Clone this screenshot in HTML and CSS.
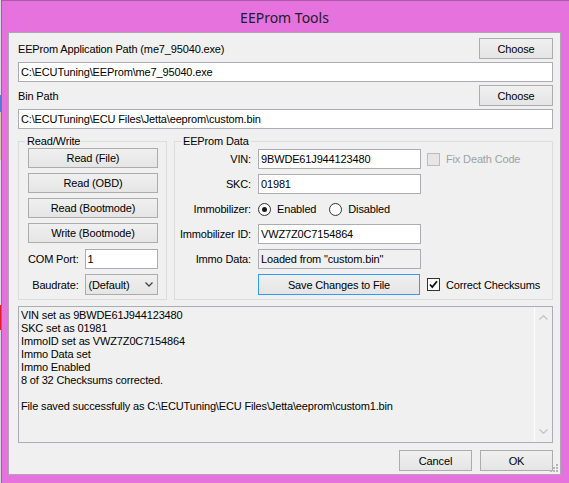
FILE: index.html
```html
<!DOCTYPE html>
<html>
<head>
<meta charset="utf-8">
<title>EEProm Tools</title>
<link rel="stylesheet" href="styles.css">
</head>
<body>
<div class="screen">
  <div class="desk"></div>
  <div class="window">
    <div class="titlebar">EEProm Tools</div>
    <div class="client">
      <div class="pathhead">
        <span>EEProm Application Path (me7_95040.exe)</span>
        <button class="btn choose">Choose</button>
      </div>
      <div class="field path">C:\ECUTuning\EEProm\me7_95040.exe</div>
      <div class="pathhead">
        <span>Bin Path</span>
        <button class="btn choose">Choose</button>
      </div>
      <div class="field path">C:\ECUTuning\ECU Files\Jetta\eeprom\custom.bin</div>

      <div class="groups">
        <fieldset class="group rw">
          <legend>Read/Write</legend>
          <div class="rw-body">
            <button class="btn wide">Read (File)</button>
            <button class="btn wide">Read (OBD)</button>
            <button class="btn wide">Read (Bootmode)</button>
            <button class="btn wide">Write (Bootmode)</button>
            <div class="rw-row com">
              <span class="rw-label">COM Port:</span>
              <div class="field small">1</div>
            </div>
            <div class="rw-row">
              <span class="rw-label">Baudrate:</span>
              <div class="combo">
                <span>(Default)</span>
                <svg class="chev" width="8" height="5" viewBox="0 0 8 5"><path d="M0.5 0.5 L4 4 L7.5 0.5" fill="none" stroke="#444" stroke-width="1.3"/></svg>
              </div>
            </div>
          </div>
        </fieldset>

        <fieldset class="group data">
          <legend>EEProm Data</legend>
          <div class="data-grid">
            <span class="lbl">VIN:</span>
            <div class="field">9BWDE61J944123480</div>
            <div class="check disabled"><span class="box"></span><span>Fix Death Code</span></div>

            <span class="lbl">SKC:</span>
            <div class="field">01981</div>
            <span></span>

            <span class="lbl">Immobilizer:</span>
            <div class="radios">
              <div class="radio on"><span class="circle"></span><span>Enabled</span></div>
              <div class="radio"><span class="circle"></span><span>Disabled</span></div>
            </div>
            <span></span>

            <span class="lbl">Immobilizer ID:</span>
            <div class="field">VWZ7Z0C7154864</div>
            <span></span>

            <span class="lbl">Immo Data:</span>
            <div class="field ro">Loaded from "custom.bin"</div>
            <span></span>

            <span></span>
            <button class="btn save">Save Changes to File</button>
            <div class="check"><span class="box"><svg width="11" height="11" viewBox="0 0 11 11"><path d="M2 5.5 L4.3 8 L9 2.2" fill="none" stroke="#111" stroke-width="1.8"/></svg></span><span>Correct Checksums</span></div>
          </div>
        </fieldset>
      </div>

      <div class="log">
        <div class="log-text">
          <div>VIN set as 9BWDE61J944123480</div>
          <div>SKC set as 01981</div>
          <div>ImmoID set as VWZ7Z0C7154864</div>
          <div>Immo Data set</div>
          <div>Immo Enabled</div>
          <div>8 of 32 Checksums corrected.</div>
          <div>&nbsp;</div>
          <div>File saved successfully as C:\ECUTuning\ECU Files\Jetta\eeprom\custom1.bin</div>
        </div>
        <div class="scroll">
          <svg width="9" height="5" viewBox="0 0 9 5"><path d="M0.5 4.5 L4.5 0.7 L8.5 4.5" fill="none" stroke="#c2c2c2" stroke-width="1.2"/></svg>
          <svg width="9" height="5" viewBox="0 0 9 5"><path d="M0.5 0.5 L4.5 4.3 L8.5 0.5" fill="none" stroke="#c2c2c2" stroke-width="1.2"/></svg>
        </div>
      </div>

      <div class="footer">
        <button class="btn foot">Cancel</button>
        <button class="btn foot">OK</button>
      </div>

      <svg class="grip" width="9" height="9" viewBox="0 0 9 9">
        <rect x="6" y="0" width="2" height="2" fill="#b5b5b5"/>
        <rect x="3" y="3" width="2" height="2" fill="#b5b5b5"/>
        <rect x="6" y="3" width="2" height="2" fill="#b5b5b5"/>
        <rect x="0" y="6" width="2" height="2" fill="#b5b5b5"/>
        <rect x="3" y="6" width="2" height="2" fill="#b5b5b5"/>
        <rect x="6" y="6" width="2" height="2" fill="#b5b5b5"/>
      </svg>
    </div>
  </div>
</div>
</body>
</html>
```

FILE: styles.css
```css
html, body {
  margin: 0;
  padding: 0;
  background: #e572dd;
}

.screen {
  display: flex;
  width: 569px;
  height: 483px;
  overflow: hidden;
  font-family: "Liberation Sans", Arial, sans-serif;
  font-size: 11px;
  letter-spacing: -0.15px;
  color: #000;
}

.desk {
  width: 1px;
  flex: none;
  background: linear-gradient(to bottom,
    #d9d9e3 0, #d9d9e3 95px, #4a7fd0 95px, #4a7fd0 112px,
    #d6c8a8 112px, #d6c8a8 160px, #e0e0e8 160px, #e0e0e8 305px,
    #e02020 305px, #e02020 330px, #d8d8e0 330px);
}

.window {
  flex: 1;
  display: flex;
  flex-direction: column;
  background: #e572dd;
  border-left: 1px solid #a95ca5;
  border-top: 1px solid #a95ca5;
  padding: 0 8px 8px 6px;
}

.titlebar {
  height: 31px;
  flex: none;
  box-sizing: border-box;
  padding-top: 2px;
  line-height: 29px;
  text-align: center;
  font-family: "Noto Sans", "Open Sans", sans-serif;
  font-size: 14px;
  letter-spacing: 0;
  color: #1c1c2a;
}

.client {
  position: relative;
  flex: 1;
  background: #f0f0f0;
  border: 1px solid #b3a2b2;
  padding: 5px 7px 0 9px;
}

.pathhead {
  display: flex;
  justify-content: space-between;
  align-items: center;
  height: 21px;
}

.pathhead + .field {
  margin-top: 3px;
}

.field + .pathhead {
  margin-top: 3px;
}

.field {
  box-sizing: border-box;
  height: 20px;
  border: 1px solid #abadb3;
  background: #fff;
  padding: 0 2px;
  line-height: 18px;
  white-space: nowrap;
  overflow: hidden;
}

.field.ro {
  background: #f0f0f0;
}

.btn {
  box-sizing: border-box;
  margin: 0;
  padding: 0;
  border: 1px solid #acacac;
  background: linear-gradient(to bottom, #f0f0f0, #e5e5e5);
  font-family: "Liberation Sans", Arial, sans-serif;
  font-size: 11px;
  letter-spacing: -0.15px;
  color: #000;
  text-align: center;
  white-space: nowrap;
}

.btn.choose {
  width: 74px;
  height: 21px;
}

.groups {
  display: flex;
  gap: 7px;
  margin-top: 6px;
}

.group {
  margin: 0;
  padding: 0;
  min-width: 0;
  border: 1px solid #dcdcdc;
}

.group legend {
  margin-left: 6px;
  padding: 0 2px;
  line-height: 13px;
  font-size: 11px;
}

.group.rw {
  width: 149px;
  box-sizing: border-box;
  flex: none;
}

.group.data {
  flex: 1;
}

.rw-body {
  display: flex;
  flex-direction: column;
  gap: 5px;
  padding: 0 8px 4px 9px;
}

.btn.wide {
  width: 130px;
  height: 20px;
}

.rw-row {
  display: flex;
  align-items: center;
  gap: 6px;
}

.rw-row.com {
  margin-top: 1px;
}

.rw-label {
  width: 51px;
  text-align: right;
  white-space: nowrap;
}

.field.small {
  width: 74px;
}

.combo {
  box-sizing: border-box;
  width: 74px;
  height: 21px;
  border: 1px solid #acacac;
  background: linear-gradient(to bottom, #f0f0f0, #e5e5e5);
  display: flex;
  align-items: center;
  justify-content: space-between;
  padding: 0 4px 0 3px;
}

.chev {
  display: block;
}

.data-grid {
  display: grid;
  grid-template-columns: 83px 169px 1fr;
  grid-template-rows: 20px 20px 20px 20px 20px 21px;
  row-gap: 5px;
  padding: 1px 0 4px 0;
  align-items: center;
}

.data-grid .field {
  width: 163px;
}

.lbl {
  text-align: right;
  padding-right: 7px;
  white-space: nowrap;
}

.radios {
  display: flex;
  align-items: center;
  gap: 13px;
}

.radio {
  display: flex;
  align-items: center;
  gap: 6px;
}

.circle {
  box-sizing: border-box;
  width: 13px;
  height: 13px;
  border: 1px solid #333;
  border-radius: 50%;
  background: #fff;
  display: flex;
  align-items: center;
  justify-content: center;
}

.radio.on .circle::after {
  content: "";
  width: 5px;
  height: 5px;
  border-radius: 50%;
  background: #1a1a1a;
}

.check {
  display: flex;
  align-items: center;
  gap: 6px;
  white-space: nowrap;
}

.check .box {
  box-sizing: border-box;
  width: 13px;
  height: 13px;
  border: 1px solid #333;
  background: #fff;
  display: flex;
  align-items: center;
  justify-content: center;
}

.check.disabled {
  color: #a0a0a0;
}

.check.disabled .box {
  border-color: #bcbcbc;
  background: #e6e6e6;
}

.btn.save {
  width: 162px;
  height: 21px;
  border-color: #3399ff;
}

.log {
  box-sizing: border-box;
  margin-top: 6px;
  height: 137px;
  border: 1px solid #abadb3;
  background: #f0f0f0;
  display: flex;
}

.log-text {
  flex: 1;
  padding: 2px 2px 0 2px;
  line-height: 13px;
  white-space: nowrap;
  overflow: hidden;
}

.scroll {
  width: 17px;
  border-left: 1px solid #fdfdfd;
  display: flex;
  flex-direction: column;
  justify-content: space-between;
  align-items: center;
  padding: 8px 0 8px 0;
}

.scroll svg {
  display: block;
}

.footer {
  display: flex;
  justify-content: flex-end;
  gap: 8px;
  margin-top: 7px;
}

.btn.foot {
  width: 73px;
  height: 21px;
}

.grip {
  position: absolute;
  right: 1px;
  bottom: 1px;
}
```
